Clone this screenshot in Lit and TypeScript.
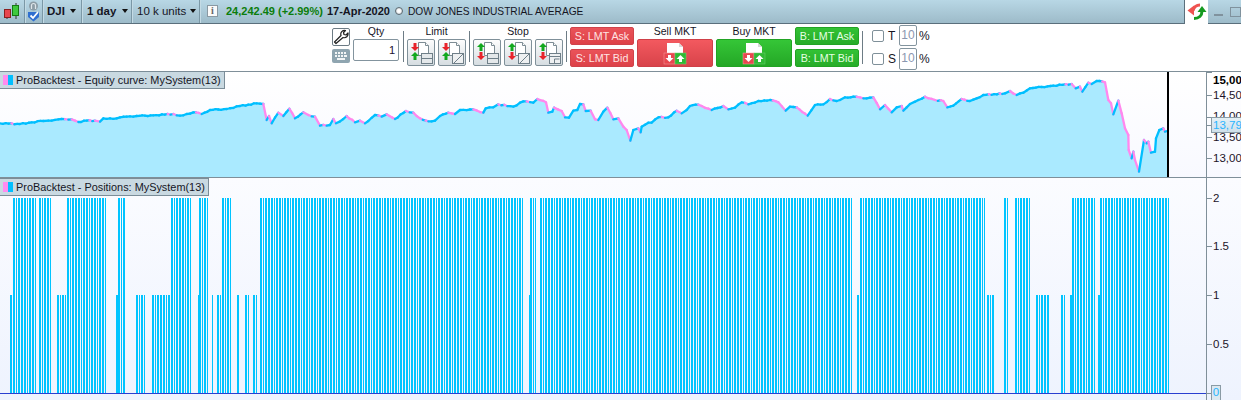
import { LitElement, html, css, svg } from "lit";
import { customElement } from "lit/decorators.js";

const A = [0,160,60,162,95,157,130,153,145,152,185,147,215,148,235,156,260,152,285,152,300,155,310,145,350,145,380,140,410,138,460,136,520,132,540,137,580,127,605,132,630,120,680,117,720,108,770,100,790,102,800,150,807,138,815,160,835,128,850,138,868,116,885,145,910,127,925,135,945,140,960,167,990,165,1000,147,1008,160,1030,147,1040,138,1065,157,1080,152,1095,160,1125,135,1145,140,1160,133,1185,147,1218,123,1240,128];
const B = [0,145,25,154,45,152,60,138,85,128,105,132,120,120,160,118,190,128,197,115,220,112,235,103,280,110,310,94,340,98,352,87,378,97,385,128,397,125,402,113,425,123,435,142,447,143,460,122,472,120,480,102,490,103,497,123,512,122,525,148,535,150,550,125,562,113,580,148,595,145,610,170,620,180,631,212,640,180,655,175,662,187,665,170,685,158,695,158,715,142,745,142,770,122,785,130,800,120,810,108,835,104,875,120,910,108,925,118,945,113,965,97,985,103,1015,93,1050,90,1075,97,1097,122,1110,110,1130,112,1163,137,1185,105,1210,103,1230,87,1250,93];
const C = [0,90,15,82,40,80,70,85,100,82,120,118,135,105,155,127,170,112,185,108,190,122,210,102,225,95,255,80,285,90,310,93,322,112,340,107,365,87,390,93,410,85,430,75,495,70,510,63,530,75,550,68,570,55,640,47,695,42,707,55,720,50,727,65,745,38,755,42,770,33,795,37,805,90,813,100,820,133,835,92,845,130,855,175,865,195,866,240,875,265,880,245,885,270,897,305,912,210,920,220,925,215,933,248,945,245,948,205,958,180,970,175,975,185,982,183];

function toPoints(arr: number[], ox: number): number[][] {
  const out: number[][] = [];
  for (let i = 0; i < arr.length; i += 2) out.push([ox + arr[i] / 3, 70 + arr[i + 1] / 3]);
  return out;
}

/** Splits long stretches into daily-sized steps with a small repeatable wobble. */
function daily(pts: number[][]): number[][] {
  const out: number[][] = [pts[0]];
  let seed = 7;
  for (let i = 1; i < pts.length; i++) {
    const [x0, y0] = pts[i - 1];
    const [x1, y1] = pts[i];
    const n = Math.max(1, Math.floor((x1 - x0) / 2.7));
    for (let k = 1; k <= n; k++) {
      seed = (seed * 31 + 11) % 101;
      const wobble = k === n ? 0 : ((seed % 3) - 1) * 0.45;
      out.push([x0 + ((x1 - x0) * k) / n, y0 + ((y1 - y0) * k) / n + wobble]);
    }
  }
  return out;
}
const CURVE = daily([...toPoints(A, 0), ...toPoints(B, 420), ...toPoints(C, 840)]);

const LEVEL2 = [[13,35],[39,50],[67,106],[118,125],[171,190],[199,208],[222,231],[260,523],[530,536],[540,851],[860,985],[1004,1009],[1015,1029],[1072,1094],[1100,1168]];
const LEVEL1 = [[10,13],[57,66],[116,118],[136,145],[152,171],[198,199],[212,213],[217,221],[237,239],[245,249],[253,256],[529,530],[857,859],[987,995],[1036,1049],[1061,1065],[1070,1072],[1098,1100]];

function barPath(segs: number[][], top: number, bottom: number): string {
  const p = 2.7;
  let d = "";
  for (const [a, b] of segs) {
    for (let k = 0; a + k * p < b; k++) {
      const x0 = Math.round(a + k * p);
      const x1 = Math.min(b, Math.round(a + (k + 1) * p) - 1);
      const w = Math.max(1, x1 - x0);
      d += `M${x0} ${top}h${w}v${bottom - top}h${-w}z`;
    }
  }
  return d;
}

const AXIS1 = [
  { t: "15,000", y: 80, bold: true },
  { t: "14,500", y: 95, tick: 95 },
  { t: "14,000", y: 116, tick: 117 },
  { t: "13,500", y: 137, tick: 137 },
  { t: "13,000", y: 158, tick: 158 },
];
const AXIS2 = [
  { t: "2", y: 198 },
  { t: "1.5", y: 246 },
  { t: "1", y: 295 },
  { t: "0.5", y: 344 },
];

const arrow = (x: number, y: number, up: boolean, c: string) => {
  const d = up
    ? `M${x} ${y}l4 4h-2.500v4h-3v-4h-2.500z`
    : `M${x} ${y + 8}l4 -4h-2.500v-4h-3v4h-2.500z`;
  return svg`<path d=${d} fill=${c}/>`;
};
const page = svg`<path d="M10.500 2.500h7l3 3v10h-10z" fill="#fff" stroke="#7d8c94"/><path d="M17.500 2.500v3h3" fill="#fff" stroke="#7d8c94"/>`;
const boxLine = svg`<rect x="13.500" y="13.500" width="11" height="10" fill="#e4e8ea" stroke="#6f7f88"/><path d="M13.500 18.500h11" stroke="#6f7f88"/>`;
const boxSlash = svg`<rect x="13.500" y="13.500" width="11" height="10" fill="#eef0f1" stroke="#6f7f88"/><path d="M15 23l9-9" stroke="#6f7f88"/>`;
const boxStep = svg`<rect x="13.500" y="13.500" width="11" height="10" fill="#eef0f1" stroke="#6f7f88"/><path d="M13.500 16.500h11M18.500 23v-4h5" fill="none" stroke="#6f7f88"/>`;

const RED = "#e8232b";
const GRN = "#12a81e";

@customElement("app-root")
export class AppRoot extends LitElement {
  static styles = css`
    :host { display: block; width: 1241px; height: 400px; overflow: hidden; background: #fff; font: 11px "Liberation Sans", Arial, sans-serif; color: #15151f; white-space: nowrap; }
    .top { display: flex; height: 24px; box-sizing: border-box; border-bottom: 1px solid #5a6f7c; background: linear-gradient(#b8d7e5, #9dbbc9); align-items: stretch; font-size: 11.500px; }
    .cell { display: flex; align-items: center; justify-content: space-between; border-right: 1px solid #7b98a6; box-shadow: 1px 0 0 #c4dbe5; box-sizing: border-box; padding-bottom: 1px; }
    .c-candle { width: 25px; padding-left: 3px; }
    .c-nav { width: 18px; padding-left: 2px; }
    .c-dji { width: 39px; padding: 0 5px 1px 4px; font-weight: bold; }
    .c-day { width: 50px; padding: 0 3px 1px 5px; font-weight: bold; }
    .c-units { width: 68px; padding: 0 3px 1px 5px; }
    .caret { width: 0; height: 0; border: 3.500px solid transparent; border-top: 4px solid #111; border-bottom: 0; }
    .quote { flex: 1; display: flex; align-items: center; padding: 0 0 1px 7px; font-size: 11px; }
    .info { height: 10px; width: 9px; background: #fafafa; border: 1px solid #8a99a2; margin-right: 8px; font: bold 10px "Liberation Serif", serif; color: #666; text-align: center; line-height: 10px; }
    .up { color: #0b7d0b; font-weight: bold; margin-right: 4px; }
    .date { font-weight: bold; margin-right: 5px; }
    .radio { width: 8px; height: 8px; border-radius: 50%; border: 1px solid #5e6b72; background: radial-gradient(#fff 30%, #b9c3c9); box-sizing: border-box; margin-right: 5px; }
    .name { font-size: 10.200px; }
    .tab { width: 24px; height: 24px; background: #fff; border-left: 1px solid #5a6f7c; box-sizing: border-box; display: flex; justify-content: center; align-items: center; }
    .win { width: 33px; display: flex; gap: 7px; padding: 7px 0 0 6px; box-sizing: border-box; }
    .min { width: 9px; height: 2px; margin-top: 7px; background: #80929d; }
    .max { width: 9px; height: 8px; border: 1px solid #80929d; }

    .bar { display: flex; height: 47px; padding-left: 332px; box-sizing: border-box; align-items: flex-start; }
    .tools { display: flex; flex-direction: column; gap: 3px; margin-top: 4px; width: 18px; }
    .wrench { width: 18px; height: 18px; box-sizing: border-box; border: 1px solid #6c7b84; border-radius: 2px; background: #fff; display: flex; }
    .keys { width: 18px; height: 14px; background: #8fa5b0; border-radius: 2px; display: flex; }
    .group { display: flex; flex-direction: column; margin-left: 3px; }
    .lbl { height: 15px; line-height: 15px; text-align: center; font-size: 10.500px; }
    .qty { width: 46px; }
    .limit { width: 59px; }
    .stop { width: 90px; }
    .input { height: 22px; box-sizing: border-box; border: 1px solid #83949e; border-radius: 2px; text-align: right; line-height: 20px; padding-right: 3px; background: #fff; color: #201030; }
    .sep { width: 1px; height: 31px; margin: 7px 0 0 3px; background: #6d7c85; }
    .sep.first { margin-left: 4px; }
    .sep.last { height: 33px; }
    .btns { display: flex; gap: 3px; }
    .icon { width: 28px; height: 27px; box-sizing: border-box; border: 1px solid #7f9099; border-radius: 2px; background: linear-gradient(#fdfdfd, #d6dde1); display: flex; }
    .lmt { display: flex; flex-direction: column; gap: 4px; margin: 3px 0 0 3px; width: 64px; font-size: 10.700px; }
    .pill { height: 18px; line-height: 17px; border-radius: 2px; text-align: center; box-sizing: border-box; }
    .pill.red { background: linear-gradient(#ea5359, #dd4148); color: #ffe3e3; border: 1px solid #d0434a; }
    .pill.green { background: linear-gradient(#33c235, #27ac28); color: #e6ffe2; border: 1px solid #22a324; }
    .mkt { width: 76px; }
    .big { height: 28px; box-sizing: border-box; border-radius: 2px; display: flex; justify-content: center; }
    .big.red { background: linear-gradient(#f3595f, #d8434a); border: 1px solid #cf4048; }
    .big.green { background: linear-gradient(#35c637, #24a726); border: 1px solid #22a324; }
    .opts { display: flex; flex-direction: column; gap: 2px; margin: 1px 0 0 9px; font-size: 12px; }
    .opt { display: flex; align-items: center; height: 21px; }
    .opt + .opt { height: 22px; }
    .check { width: 12px; height: 12px; box-sizing: border-box; border: 1px solid #7f9099; border-radius: 2px; background: #fff; }
    .opt-l { width: 11px; margin-left: 4px; }
    .pct { width: 18px; height: 100%; box-sizing: border-box; border: 1px solid #83949e; border-radius: 2px; color: #8b97b0; text-align: center; line-height: 19px; }
    .pc { margin-left: 2px; }

    .pane { position: relative; display: grid; grid-template-columns: 1206px 35px; box-sizing: border-box; }
    .eq { height: 107px; border-top: 1px solid #7f8f99; border-bottom: 1px solid #7f8f99; background: linear-gradient(#fff, #f8f9ff); }
    .pos { height: 222px; background: linear-gradient(#fbfcff, #eef3fe); }
    .plot { display: block; }
    .axis { position: relative; border-left: 1px solid #7f8f99; overflow: hidden; font-size: 11.500px; }
    .legend { position: absolute; left: 0; top: -1px; height: 18px; box-sizing: border-box; background: #c9d9e1; border: 1px solid #7b8d98; border-left: 0; display: flex; align-items: center; padding: 0 3px 0 3px; font-size: 10.900px; }
    .pos .legend { top: 0; }
    .sw { width: 5px; height: 10px; }
    .sw.p { background: #ff8cf0; }
    .sw.c { background: #00bfff; margin-right: 3px; }
    .lab { position: absolute; left: 6px; height: 14px; line-height: 14px; transform: translateY(-7px); color: #1c1428; }
    .lab.b { font-weight: bold; color: #000; }
    .tick { position: absolute; left: 0; width: 5px; height: 1px; background: #7f8f99; }
    .now { position: absolute; left: 4px; width: 40px; box-sizing: border-box; height: 16px; border: 1px solid #8a9ba5; background: linear-gradient(#e4eff5, #cfe0ea); color: #29b4ff; line-height: 14px; padding-left: 1px; }
    .zero { position: absolute; left: 4px; top: 207px; width: 10px; height: 20px; box-sizing: border-box; border: 1px solid #8a9ba5; background: #dbe8f0; color: #29b4ff; line-height: 13px; text-align: center; }
  `;

  private curve() {
    const pts = CURVE;
    const area = `M0 177L${pts.map((p) => p.join(" ")).join("L")}L1167 177Z`;
    const segs = pts.slice(1).map((p, i) => {
      const q = pts[i];
      const c = p[1] > q[1] + 0.55 ? "#ff88ee" : "#00bfff";
      return svg`<path d="M${q[0]} ${q[1]}L${p[0]} ${p[1]}" stroke=${c} stroke-width="2.300" stroke-linecap="round" fill="none"/>`;
    });
    return html`<svg class="plot" width="1206" height="105" viewBox="0 72 1206 105">
      <path d=${area} fill="#aaeaff"/>
      ${segs}
      <rect x="1167" y="72" width="2" height="105" fill="#000"/>
    </svg>`;
  }

  private positions() {
    return html`<svg class="plot" width="1206" height="222" viewBox="0 178 1206 222">
      <g shape-rendering="crispEdges">
        <path d=${barPath(LEVEL2, 198, 393)} fill="#00c4ff"/>
        <path d=${barPath(LEVEL1, 295, 393)} fill="#00c4ff"/>
        <rect x="0" y="393" width="1206" height="1" fill="#2a3fd0"/>
      </g>
    </svg>`;
  }

  private iconBtn(first: unknown, box: unknown) {
    return html`<div class="icon"><svg width="26" height="25" viewBox="0 0 26 25">${page}${first}${box}</svg></div>`;
  }

  private bigBtn(c: string) {
    return html`<div class="big ${c}"><svg width="24" height="26" viewBox="0 0 24 26">
      <path d="M4 3h12l4 4v8H4z" fill="#fff"/><path d="M16 3v4h4z" fill="#d8d8d8"/>
      <rect x="1" y="13" width="11" height="11" fill="#e8474f" stroke="#f8a0a0" stroke-width=".5"/>
      <rect x="12" y="13" width="11" height="11" fill="#2fb935" stroke="#70d070" stroke-width=".5"/>
      <path d="M6.500 22l-4-4h2.500v-3h3v3h2.500z" fill="#fff"/>
      <path d="M17.500 15l4 4h-2.500v3h-3v-3h-2.500z" fill="#fff"/>
    </svg></div>`;
  }

  render() {
    return html`
      <div class="top">
        <div class="cell c-candle"><svg width="17" height="18" viewBox="0 0 17 18">
          <path d="M4 8v9M13 1v16" stroke="#333" />
          <rect x="1.500" y="7.500" width="6" height="8" fill="#e8474f" stroke="#8a2020"/>
          <rect x="9.500" y="3.500" width="6" height="10" fill="#3ec93e" stroke="#157a15"/>
        </svg></div>
        <div class="cell c-nav"><svg width="13" height="21" viewBox="0 0 13 21">
          <circle cx="6.500" cy="5" r="4.500" fill="#8d9da6"/>
          <path d="M4.500 8V4.500a2 2 0 0 1 4 0V8" fill="none" stroke="#dfe6ea" stroke-width="1.200"/>
          <path d="M1 11h11v5l-5.500 4.500L1 16z" fill="#2f6fd0"/>
          <path d="M3.500 14.500l2.500 2.500 5-6" fill="none" stroke="#fff" stroke-width="1.800"/>
        </svg></div>
        <div class="cell c-dji">DJI<span class="caret"></span></div>
        <div class="cell c-day">1 day<span class="caret"></span></div>
        <div class="cell c-units">10 k units<span class="caret"></span></div>
        <div class="quote">
          <span class="info">i</span>
          <span class="up">24,242.49 (+2.99%)</span>
          <span class="date">17-Apr-2020</span>
          <span class="radio"></span>
          <span class="name">DOW JONES INDUSTRIAL AVERAGE</span>
        </div>
        <div class="tab"><svg width="20" height="18" viewBox="0 0 20 18">
          <path d="M.500 7.500L7 2.500v10z" fill="#ef5350"/>
          <path d="M6 7.500C7 4 10 2 13 2" fill="none" stroke="#ef5350" stroke-width="3"/>
          <path d="M15 3L19.500 9h-9z" fill="#159a20"/>
          <path d="M15 8C15 12.500 12 15.500 7 15.500" fill="none" stroke="#159a20" stroke-width="3"/>
        </svg></div>
        <div class="win"><span class="min"></span><span class="max"></span></div>
      </div>

      <div class="bar">
        <div class="tools">
          <div class="wrench"><svg width="16" height="16" viewBox="0 0 16 16">
            <path d="M3 14.500L1.500 13 8 6.500C7 3.500 9.500 1 12.500 1.500L10.500 3.500l.5 2 2 .5 2-2c.5 3-2 5.500-5 4.500L3 14.500z" fill="#fff" stroke="#222" stroke-width="1.200" stroke-linejoin="round"/>
          </svg></div>
          <div class="keys"><svg width="18" height="14" viewBox="0 0 18 14">
            <path d="M3 3h2v2H3zM6 3h2v2H6zM9 3h2v2H9zM12 3h2v2h-2zM3 6h2v2H3zM6 6h2v2H6zM9 6h2v2H9zM12 6h3v2h-3zM5 9h8v2H5z" fill="#f2f5f6"/>
          </svg></div>
        </div>
        <div class="group qty"><div class="lbl">Qty</div><div class="input">1</div></div>
        <div class="sep first"></div>
        <div class="group limit"><div class="lbl">Limit</div><div class="btns">
          ${this.iconBtn(svg`${arrow(7, 3, false, RED)}${arrow(7, 12, true, GRN)}`, boxLine)}
          ${this.iconBtn(svg`${arrow(7, 3, false, RED)}${arrow(7, 12, true, GRN)}`, boxSlash)}
        </div></div>
        <div class="sep"></div>
        <div class="group stop"><div class="lbl">Stop</div><div class="btns">
          ${this.iconBtn(svg`${arrow(7, 3, true, GRN)}${arrow(7, 12, false, RED)}`, boxLine)}
          ${this.iconBtn(svg`${arrow(7, 3, true, GRN)}${arrow(7, 12, false, RED)}`, boxSlash)}
          ${this.iconBtn(svg`${arrow(7, 3, true, GRN)}${arrow(7, 12, false, RED)}`, boxStep)}
        </div></div>
        <div class="sep"></div>
        <div class="lmt"><div class="pill red">S: LMT Ask</div><div class="pill red">S: LMT Bid</div></div>
        <div class="group mkt"><div class="lbl">Sell MKT</div>${this.bigBtn("red")}</div>
        <div class="group mkt"><div class="lbl">Buy MKT</div>${this.bigBtn("green")}</div>
        <div class="lmt"><div class="pill green">B: LMT Ask</div><div class="pill green">B: LMT Bid</div></div>
        <div class="sep last"></div>
        <div class="opts">
          <div class="opt"><span class="check"></span><span class="opt-l">T</span><span class="pct">10</span><span class="pc">%</span></div>
          <div class="opt"><span class="check"></span><span class="opt-l">S</span><span class="pct">10</span><span class="pc">%</span></div>
        </div>
      </div>

      <div class="pane eq">
        ${this.curve()}
        <div class="axis">
          <span class="tick" style="top:0"></span>
          ${AXIS1.map((a) => html`
            ${a.tick ? html`<span class="tick" style="top:${a.tick - 72}px"></span>` : ""}
            <span class="lab ${a.bold ? "b" : ""}" style="top:${a.y - 72}px">${a.t}</span>`)}
          <span class="tick" style="top:53px"></span>
          <span class="now" style="top:45px">13,793</span>
        </div>
        <div class="legend"><span class="sw p"></span><span class="sw c"></span>ProBacktest - Equity curve: MySystem(13)</div>
      </div>
      <div class="pane pos">
        ${this.positions()}
        <div class="axis">
          ${AXIS2.map((a) => html`
            <span class="tick" style="top:${a.y - 178}px"></span>
            <span class="lab" style="top:${a.y - 178}px">${a.t}</span>`)}
          <span class="tick" style="top:215px"></span>
          <span class="zero">0</span>
        </div>
        <div class="legend"><span class="sw p"></span><span class="sw c"></span>ProBacktest - Positions: MySystem(13)</div>
      </div>
    `;
  }
}
